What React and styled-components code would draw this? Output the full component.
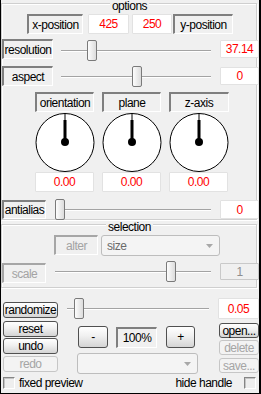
import React from "react";
import styled, { createGlobalStyle } from "styled-components";

const Global = createGlobalStyle`
  html, body { margin: 0; padding: 0; background: #fff; }
  body { font-family: "Liberation Sans", Arial, sans-serif; font-size: 12px; }
  * { box-sizing: border-box; }
`;

const Window = styled.div`
  width: 261px;
  height: 394px;
  background: #f0f0f0;
  border-left: 1px solid #000;
  border-right: 2px solid #000;
  border-bottom: 1px solid #000;
  display: flex;
  flex-direction: column;
  color: #000;
  letter-spacing: -0.5px;
  overflow: hidden;
`;

// etched group frame, title sits over the top line
const Group = styled.div`
  position: relative;
  z-index: 0;
  margin-right: 1px;
  padding-bottom: ${(p) => p.$pb || 0}px;
  &::before {
    content: "";
    position: absolute;
    z-index: -1;
    top: 3px;
    left: 0;
    right: 1px;
    bottom: 1px;
    border: 1px solid #cfcfcf;
    box-shadow: 1px 1px 0 #fff, inset 1px 1px 0 #fff;
  }
`;

const Title = styled.div`
  height: 12px;
  line-height: 12px;
  display: flex;
  justify-content: center;
  & > span {
    background: #f0f0f0;
    padding: 0 2px;
  }
`;

const Row = styled.div`
  display: flex;
  align-items: flex-start;
  margin-top: ${(p) => p.$mt || 0}px;
  padding-left: ${(p) => p.$pl || 0}px;
`;

const LabelBox = styled.div`
  flex: none;
  width: ${(p) => p.$w}px;
  height: ${(p) => p.$h || 20}px;
  margin-left: ${(p) => p.$ml || 0}px;
  margin-top: ${(p) => p.$mt || 0}px;
  display: flex;
  align-items: center;
  justify-content: center;
  background: #f0f0f0;
  border-top: 2px solid ${(p) => (p.$off ? "#a6a6a6" : "#7f7f7f")};
  border-left: 2px solid ${(p) => (p.$off ? "#a6a6a6" : "#7f7f7f")};
  border-right: 1px solid #fff;
  border-bottom: 1px solid #fff;
  color: ${(p) => (p.$off ? "#a3a3a3" : "#000")};
  white-space: nowrap;
`;

const Value = styled.div`
  flex: none;
  width: ${(p) => p.$w}px;
  height: ${(p) => p.$h || 20}px;
  margin-left: ${(p) => p.$ml || 0}px;
  margin-top: ${(p) => p.$mt || 0}px;
  display: flex;
  align-items: center;
  justify-content: center;
  background: ${(p) => (p.$off ? "#f0f0f0" : "#fff")};
  border: 1px solid ${(p) => (p.$off ? "#c9c9c9" : "#e2e2e2")};
  border-radius: 1px;
  color: ${(p) => (p.$off ? "#8e8e8e" : "#f00")};
`;

// trackbar
const SliderBox = styled.div`
  position: relative;
  flex: none;
  width: ${(p) => p.$w}px;
  height: 21px;
  margin-left: ${(p) => p.$ml || 0}px;
  margin-top: ${(p) => p.$mt || 0}px;
`;
const Track = styled.div`
  position: absolute;
  left: 5px;
  right: 5px;
  top: 10px;
  height: 2px;
  border-top: 1px solid #a3a3a3;
  border-bottom: 1px solid #fff;
`;
const Thumb = styled.div`
  position: absolute;
  top: 0;
  width: 10px;
  height: 21px;
  border: 1px solid #7a7a7a;
  border-radius: 2px;
  background: linear-gradient(to right, #fdfdfd, #dcdcdc);
`;

const Slider = ({ w, ml, mt, value }) => (
  <SliderBox $w={w} $ml={ml} $mt={mt}>
    <Track />
    <Thumb style={{ left: Math.round(value * (w - 10)) }} />
  </SliderBox>
);

const DialGrid = styled.div`
  display: grid;
  grid-template-columns: repeat(3, 67px);
  justify-items: center;
  padding-left: 30px;
  margin-top: ${(p) => p.$mt || 0}px;
`;

const Dial = () => (
  <svg width="60" height="59" viewBox="0 0 60 59">
    <circle cx="30" cy="29.5" r="29" fill="#fff" stroke="#000" />
    <line x1="30" y1="0.5" x2="30" y2="7" stroke="#000" />
    <rect x="28.5" y="7" width="3" height="22" fill="#000" />
    <circle cx="30" cy="29" r="4" fill="#000" />
  </svg>
);

const Button = styled.button`
  flex: none;
  display: block;
  width: ${(p) => p.$w}px;
  height: ${(p) => p.$h || 16}px;
  margin: ${(p) => p.$mt || 0}px 0 0 ${(p) => p.$ml || 0}px;
  padding: 0;
  font: inherit;
  letter-spacing: inherit;
  line-height: 1;
  border: 1px solid ${(p) => (p.disabled ? "#c6c6c6" : "#505050")};
  border-radius: 3px;
  background: ${(p) =>
    p.disabled ? "#f3f3f3" : "linear-gradient(#ffffff, #f0f0f0 45%, #d4d4d4)"};
  color: ${(p) => (p.disabled ? "#a5a5a5" : "#000")};
`;

const Combo = styled.div`
  flex: none;
  width: ${(p) => p.$w}px;
  height: 21px;
  margin: ${(p) => p.$mt || 0}px 0 0 ${(p) => p.$ml || 0}px;
  display: flex;
  align-items: center;
  justify-content: space-between;
  padding: 0 6px 0 5px;
  border: 1px solid #bdbdbd;
  border-radius: 3px;
  background: #f4f4f4;
  color: #6a6a6a;
`;

const Arrow = () => (
  <svg width="7" height="4" viewBox="0 0 7 4">
    <polygon points="0,0 7,0 3.5,4" fill="#a8a8a8" />
  </svg>
);

const Column = styled.div`
  display: flex;
  flex-direction: column;
  margin-left: ${(p) => p.$ml || 0}px;
`;

const Check = styled.span`
  flex: none;
  width: 12px;
  height: 12px;
  margin-left: ${(p) => p.$ml || 0}px;
  border-top: 1px solid #858585;
  border-left: 1px solid #858585;
  border-right: 1px solid #fff;
  border-bottom: 1px solid #fff;
  box-shadow: inset 1px 1px 0 #c4c4c4;
  background: #eeeeee;
`;

const CheckRow = styled.div`
  display: flex;
  align-items: center;
  height: 12px;
  margin-top: ${(p) => p.$mt || 0}px;
  padding-left: 2px;
  & > label {
    margin-left: ${(p) => p.$gap || 4}px;
  }
`;

const Spacer = styled.div`
  flex: ${(p) => (p.$w ? "none" : 1)};
  width: ${(p) => p.$w || 0}px;
`;

export default function App() {
  return (
    <>
      <Global />
      <Window>
        <Group $pb={1}>
          <Title>
            <span>options</span>
          </Title>
          <Row $mt={2} $pl={26}>
            <LabelBox $w={56}>x-position</LabelBox>
            <Value $w={41} $ml={5}>425</Value>
            <Value $w={40} $ml={3}>250</Value>
            <LabelBox $w={60} $ml={1}>y-position</LabelBox>
          </Row>
          <Row $mt={5} $pl={1}>
            <LabelBox $w={51}>resolution</LabelBox>
            <Slider w={160} ml={3} mt={1} value={0.207} />
            <Value $w={39} $h={18} $ml={4} $mt={1}>37.14</Value>
          </Row>
          <Row $mt={5} $pl={1}>
            <LabelBox $w={51}>aspect</LabelBox>
            <Slider w={160} ml={3} value={0.507} />
            <Value $w={39} $h={18} $ml={4} $mt={1}>0</Value>
          </Row>
          <DialGrid $mt={5}>
            <LabelBox $w={59}>orientation</LabelBox>
            <LabelBox $w={59}>plane</LabelBox>
            <LabelBox $w={60}>z-axis</LabelBox>
          </DialGrid>
          <DialGrid $mt={1}>
            <Dial />
            <Dial />
            <Dial />
          </DialGrid>
          <DialGrid>
            <Value $w={59}>0.00</Value>
            <Value $w={59}>0.00</Value>
            <Value $w={59}>0.00</Value>
          </DialGrid>
          <Row $mt={7} $pl={1}>
            <LabelBox $w={44} $h={19} $mt={1}>antialias</LabelBox>
            <Slider w={161} ml={9} value={0} />
            <Value $w={39} $h={19} $ml={4} $mt={1}>0</Value>
          </Row>
        </Group>

        <Group $pb={6}>
          <Title>
            <span>selection</span>
          </Title>
          <Row $mt={2} $pl={53}>
            <LabelBox $w={44} $off>alter</LabelBox>
            <Combo $w={119} $ml={3}>
              <span>size</span>
              <Arrow />
            </Combo>
          </Row>
          <Row $mt={5} $pl={1}>
            <LabelBox $w={44} $mt={2} $off>scale</LabelBox>
            <Slider w={166} ml={4} value={0.744} />
            <Value $w={39} $h={17} $ml={4} $mt={2} $off>1</Value>
          </Row>
        </Group>

        <Row $mt={9} $pl={2}>
          <Button $w={55} $mt={4}>randomize</Button>
          <Slider w={152} ml={4} value={0.085} />
          <Value $w={41} $h={21} $ml={4}>0.05</Value>
        </Row>
        <Row $mt={2} $pl={2}>
          <Column>
            <Button $w={55}>reset</Button>
            <Button $w={55} $mt={1}>undo</Button>
            <Button $w={55} $mt={2} disabled>redo</Button>
          </Column>
          <Column $ml={19}>
            <Row $mt={5}>
              <Button $w={30} $h={22} $ml={1}>-</Button>
              <LabelBox $w={41} $h={21} $ml={8} $mt={1}>100%</LabelBox>
              <Button $w={29} $h={22} $ml={9}>+</Button>
            </Row>
            <Combo $w={121} $mt={5}>
              <span />
              <Arrow />
            </Combo>
          </Column>
          <Column $ml={21}>
            <Button $w={40} $h={15} $mt={2}>open...</Button>
            <Button $w={40} $h={15} $mt={2} disabled>delete</Button>
            <Button $w={40} $h={15} $mt={3} disabled>save...</Button>
          </Column>
        </Row>
        <CheckRow $mt={3}>
          <Check />
          <label>fixed preview</label>
          <Spacer />
          <span>hide handle</span>
          <Check $ml={12} />
          <Spacer $w={3} />
        </CheckRow>
      </Window>
    </>
  );
}
